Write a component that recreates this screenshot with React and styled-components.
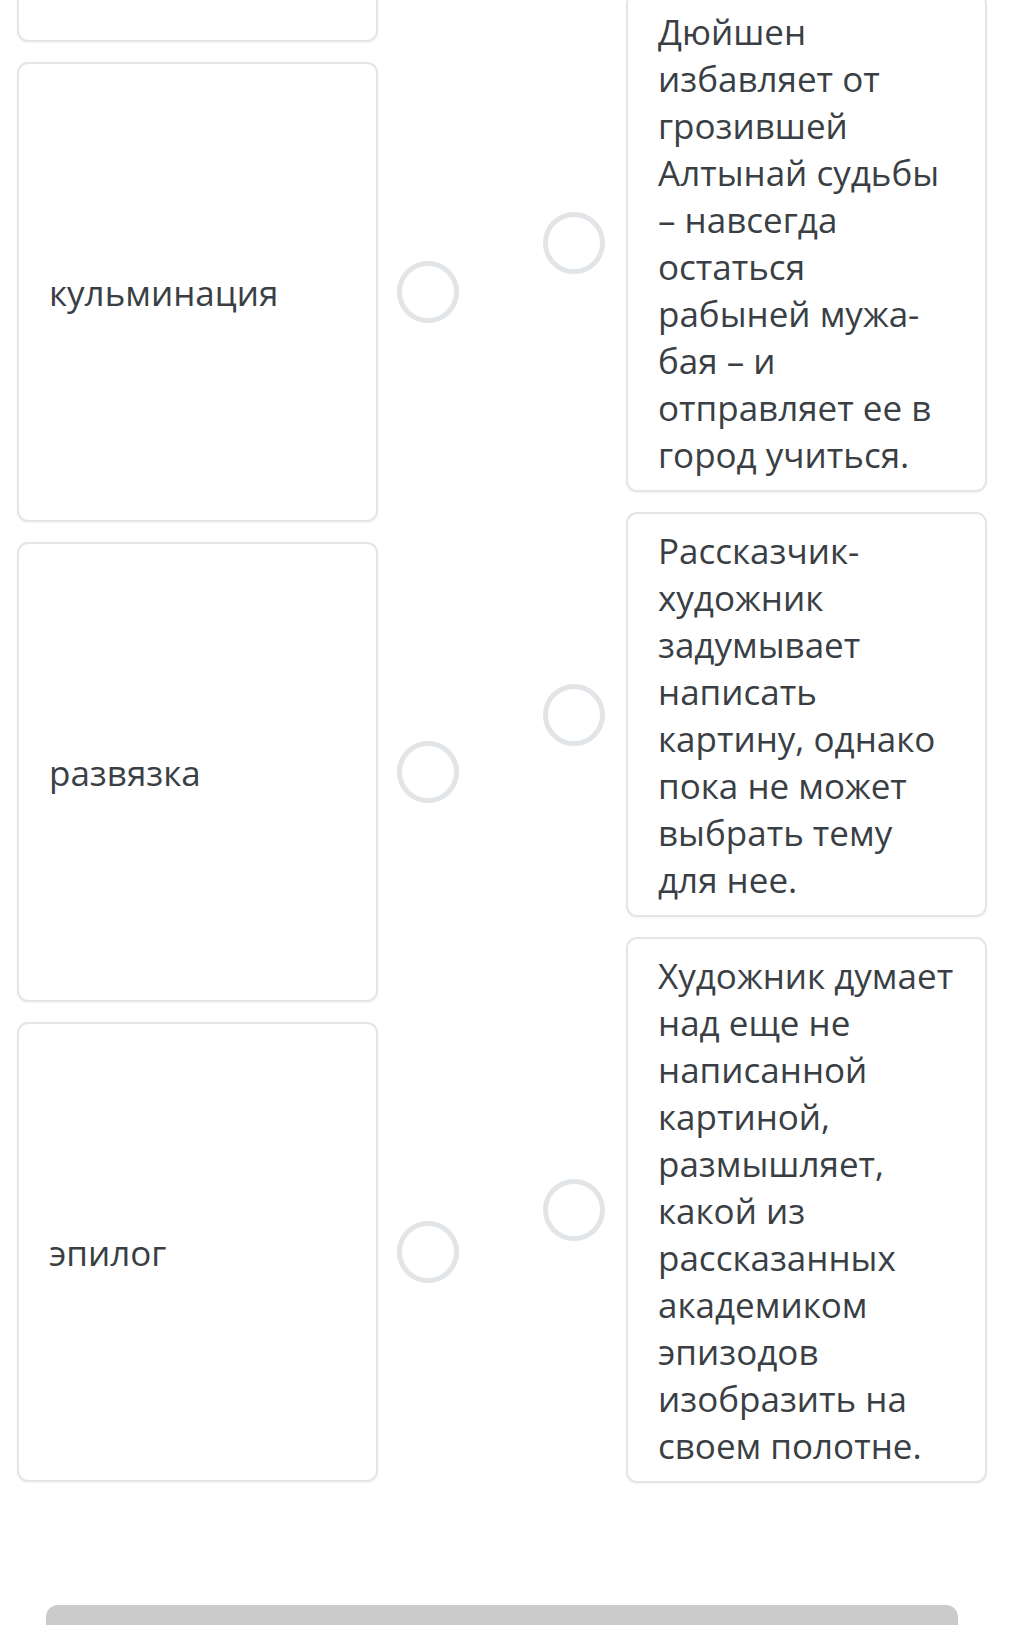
import React from 'react';
import styled, { createGlobalStyle } from 'styled-components';

const GlobalStyle = createGlobalStyle`
  html, body {
    margin: 0;
    padding: 0;
    background: #ffffff;
  }
  body {
    font-family: "Open Sans", "Noto Sans", sans-serif;
    color: #3b4046;
  }
`;

const Page = styled.div`
  width: 1018px;
  height: 1625px;
  overflow: hidden;
  background: #ffffff;
`;

const Board = styled.div`
  display: flex;
  align-items: flex-start;
  padding-left: 17px;
`;

const Column = styled.div`
  display: flex;
  flex-direction: column;
  gap: 20px;
  margin-top: ${({ offset }) => offset}px;
  margin-left: ${({ shift }) => shift || 0}px;
`;

const Row = styled.div`
  display: flex;
  align-items: center;
`;

const Card = styled.div`
  box-sizing: border-box;
  width: 361px;
  min-height: ${({ tall }) => (tall ? '460px' : '0')};
  display: flex;
  align-items: center;
  padding: 12.5px 29px 12.5px 30px;
  border: 2px solid #e3e6e9;
  border-radius: 11px;
  background: #ffffff;
  box-shadow: 0 1px 2px rgba(0, 0, 0, 0.05);
  margin-left: ${({ gapLeft }) => gapLeft || 0}px;
`;

const CardText = styled.span`
  font-size: 35px;
  line-height: 47px;
  color: #3a3f45;
  overflow-wrap: break-word;
`;

const Dot = styled.span`
  box-sizing: border-box;
  flex: none;
  width: 62px;
  height: 62px;
  border-radius: 50%;
  border: 5px solid #e2e5e8;
  background: #ffffff;
  margin-left: ${({ gapLeft }) => gapLeft || 0}px;
`;

const BottomBar = styled.div`
  margin: 122px 0 0 46px;
  width: 912px;
  height: 40px;
  background: #cbcbcb;
  border-radius: 12px 12px 0 0;
`;

// first card is scrolled out of view above the top edge
const terms = ['', 'кульминация', 'развязка', 'эпилог'];

const answers = [
  'Дюйшен избавляет от грозившей Алтынай судьбы – навсегда остаться рабыней мужа-бая – и отправляет ее в город учиться.',
  'Рассказчик-художник задумывает написать картину, однако пока не может выбрать тему для нее.',
  'Художник думает над еще не написанной картиной, размышляет, какой из рассказанных академиком эпизодов изобразить на своем полотне.',
];

const App = () => {
  return (
    <Page>
      <GlobalStyle />
      <Board>
        <Column offset={-418}>
          {terms.map((t, i) => (
            <Row key={i}>
              <Card tall>
                <CardText>{t}</CardText>
              </Card>
              <Dot gapLeft={19} />
            </Row>
          ))}
        </Column>
        <Column offset={-7} shift={84}>
          {answers.map((a) => (
            <Row key={a}>
              <Dot />
              <Card gapLeft={21}>
                <CardText>{a}</CardText>
              </Card>
            </Row>
          ))}
        </Column>
      </Board>
      <BottomBar />
    </Page>
  );
};

export default App;
